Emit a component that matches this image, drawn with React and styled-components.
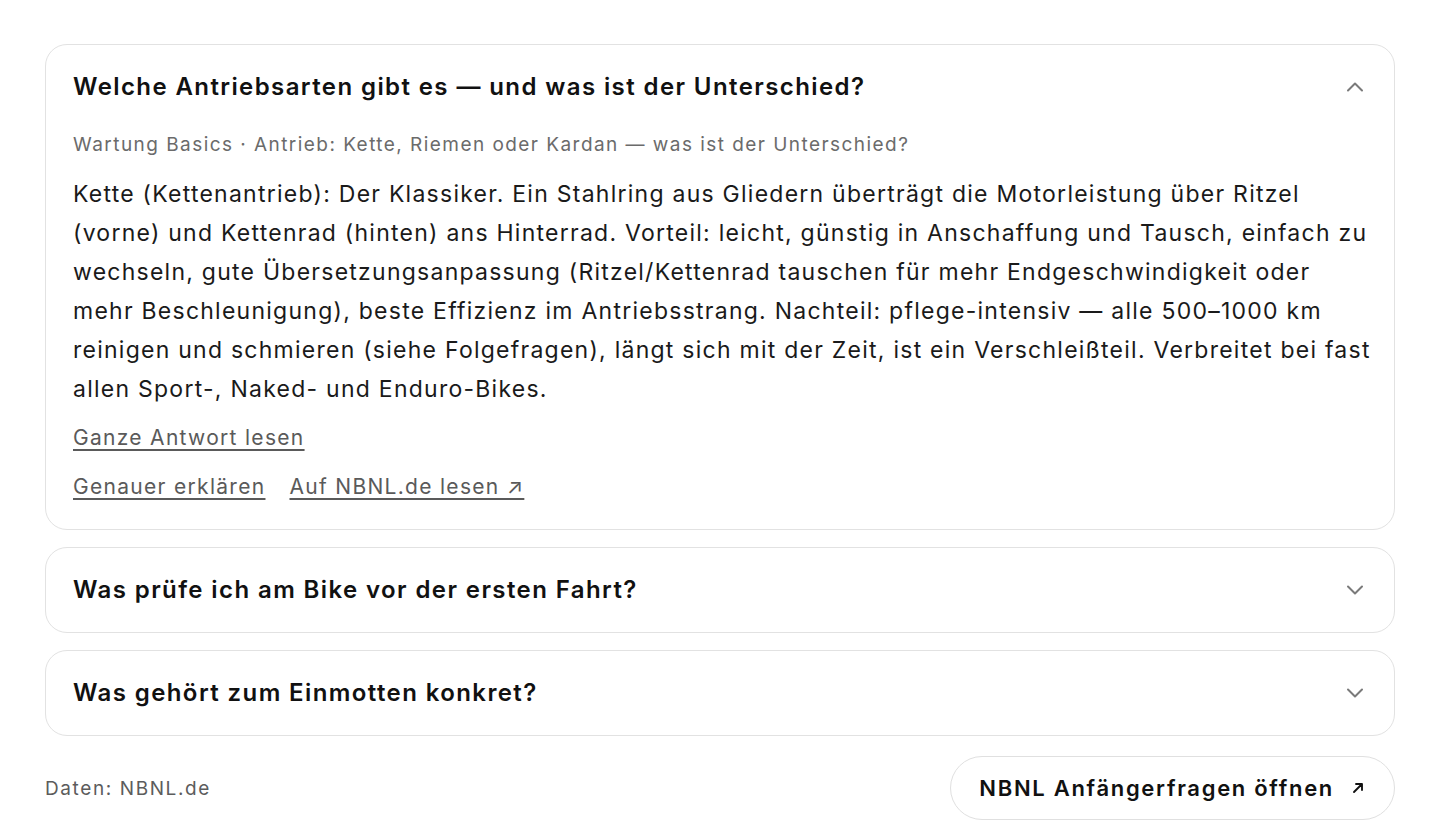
import React, { useState } from 'react';
import styled, { createGlobalStyle } from 'styled-components';

const GlobalStyle = createGlobalStyle`
  body {
    margin: 0;
    background: #fff;
    font-family: Inter, "Noto Sans", "Liberation Sans", sans-serif;
    color: #111;
  }
`;

const faqs = [
  {
    q: 'Welche Antriebsarten gibt es — und was ist der Unterschied?',
    meta: 'Wartung Basics · Antrieb: Kette, Riemen oder Kardan — was ist der Unterschied?',
    a: 'Kette (Kettenantrieb): Der Klassiker. Ein Stahlring aus Gliedern überträgt die Motorleistung über Ritzel (vorne) und Kettenrad (hinten) ans Hinterrad. Vorteil: leicht, günstig in Anschaffung und Tausch, einfach zu wechseln, gute Übersetzungsanpassung (Ritzel/Kettenrad tauschen für mehr Endgeschwindigkeit oder mehr Beschleunigung), beste Effizienz im Antriebsstrang. Nachteil: pflege-intensiv — alle 500–1000 km reinigen und schmieren (siehe Folgefragen), längt sich mit der Zeit, ist ein Verschleißteil. Verbreitet bei fast allen Sport-, Naked- und Enduro-Bikes.',
  },
  { q: 'Was prüfe ich am Bike vor der ersten Fahrt?' },
  { q: 'Was gehört zum Einmotten konkret?' },
];

const Chevron = ({ up }) => (
  <svg width="24" height="24" viewBox="0 0 24 24" fill="none" stroke="#7a7a7a" strokeWidth="2" strokeLinecap="round" strokeLinejoin="round">
    {up ? <path d="M5 15.5l7-7 7 7" /> : <path d="M5 8.5l7 7 7-7" />}
  </svg>
);

const Arrow = () => (
  <svg width="16" height="16" viewBox="0 0 24 24" fill="none" stroke="#111" strokeWidth="2.8" strokeLinecap="round" strokeLinejoin="round">
    <path d="M6 18L18 6M9 6h9v9" />
  </svg>
);

export default function App() {
  const [open, setOpen] = useState(0);
  return (
    <>
      <GlobalStyle />
      <Page>
        <List>
          {faqs.map((f, i) => (
            <Card key={i}>
              <Header onClick={() => setOpen(open === i ? -1 : i)}>
                <Question>{f.q}</Question>
                <Chevron up={open === i} />
              </Header>
              {open === i && f.a && (
                <Body>
                  <Meta>{f.meta}</Meta>
                  <Answer>{f.a}</Answer>
                  <LinkRow>
                    <TextLink href="#">Ganze Antwort lesen</TextLink>
                  </LinkRow>
                  <LinkRow>
                    <TextLink href="#">Genauer erklären</TextLink>
                    <TextLink href="#">Auf NBNL.de lesen ↗</TextLink>
                  </LinkRow>
                </Body>
              )}
            </Card>
          ))}
        </List>
        <Footer>
          <Source>Daten: NBNL.de</Source>
          <PillButton>
            NBNL Anfängerfragen öffnen
            <Arrow />
          </PillButton>
        </Footer>
      </Page>
    </>
  );
}

const Page = styled.div`
  padding: 44px 45px 18px;
`;

const List = styled.div`
  display: flex;
  flex-direction: column;
  gap: 17px;
`;

const Card = styled.div`
  border: 1.5px solid #e2e2e2;
  border-radius: 22px;
  background: #fff;
`;

const Header = styled.div`
  display: flex;
  align-items: center;
  justify-content: space-between;
  padding: 27px;
  cursor: pointer;
  svg {
    flex-shrink: 0;
  }
`;

const Question = styled.h3`
  margin: 0;
  font-size: 24px;
  line-height: 30px;
  font-weight: 600;
  letter-spacing: 1.4px;
  color: #111;
`;

const Body = styled.div`
  padding: 2px 27px 24px;
`;

const Meta = styled.div`
  font-size: 19px;
  line-height: 28px;
  letter-spacing: 1.45px;
  color: #6b6b6b;
  margin-bottom: 16px;
`;

const Answer = styled.p`
  margin: 0 -4px 11px 0;
  font-size: 23px;
  line-height: 39px;
  letter-spacing: 1.25px;
  color: #1a1a1a;
`;

const LinkRow = styled.div`
  display: flex;
  gap: 24px;
  & + & {
    margin-top: 13px;
  }
`;

const TextLink = styled.a`
  font-size: 21px;
  line-height: 36px;
  letter-spacing: 1.3px;
  color: #5a5a5a;
  text-decoration: underline;
  text-underline-offset: 4px;
  text-decoration-thickness: 1.5px;
`;

const Footer = styled.div`
  display: flex;
  align-items: center;
  justify-content: space-between;
  margin-top: 20px;
`;

const Source = styled.span`
  font-size: 19px;
  letter-spacing: 1.6px;
  color: #5c5c5c;
`;

const PillButton = styled.button`
  display: inline-flex;
  align-items: center;
  gap: 16px;
  height: 64px;
  padding: 0 28px;
  border: 1.5px solid #e0e0e0;
  border-radius: 32px;
  background: #fff;
  font-family: inherit;
  font-size: 22px;
  font-weight: 600;
  letter-spacing: 1.7px;
  color: #111;
  cursor: pointer;
`;
